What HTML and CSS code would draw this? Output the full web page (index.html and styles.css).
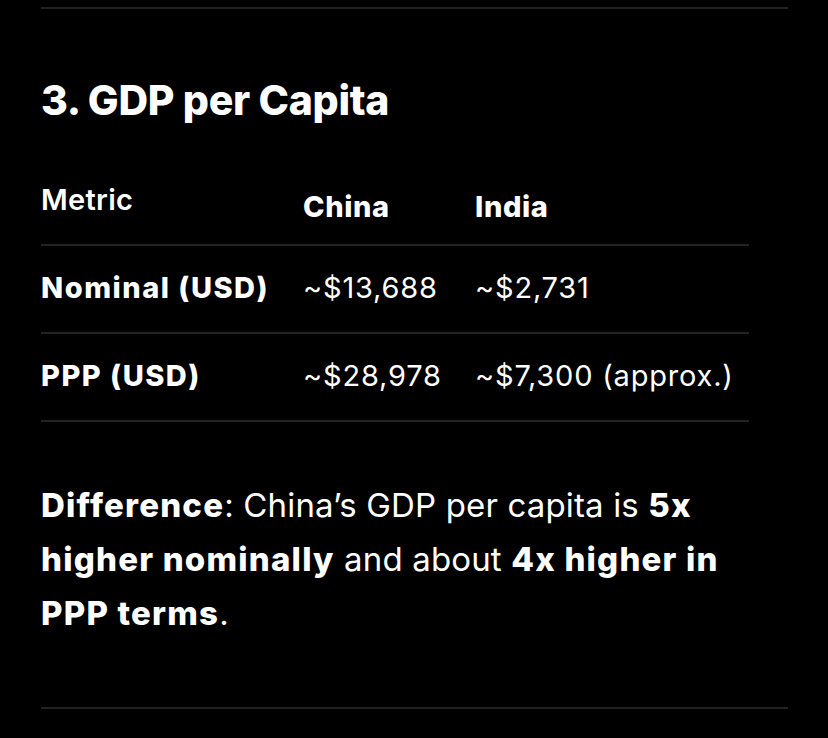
FILE: index.html
```html
<!DOCTYPE html>
<html lang="en">
<head>
<meta charset="utf-8">
<title>GDP per Capita</title>
<link rel="stylesheet" href="styles.css">
</head>
<body>
<div class="page">
  <div class="rule"></div>
  <h2 class="heading">3. GDP per Capita</h2>
  <table class="data">
    <colgroup>
      <col class="c1"><col class="c2"><col class="c3">
    </colgroup>
    <thead>
      <tr>
        <th class="metric">Metric</th>
        <th class="country">China</th>
        <th class="country">India</th>
      </tr>
    </thead>
    <tbody>
      <tr>
        <td class="label">Nominal (USD)</td>
        <td>~$13,688</td>
        <td>~$2,731</td>
      </tr>
      <tr>
        <td class="label">PPP (USD)</td>
        <td>~$28,978</td>
        <td>~$7,300 (approx.)</td>
      </tr>
    </tbody>
  </table>
  <p class="note"><strong>Difference</strong>: China’s GDP per capita is <strong>5x higher nominally</strong> and about <strong>4x higher in PPP terms</strong>.</p>
  <div class="rule rule-bottom"></div>
</div>
</body>
</html>
```
FILE: styles.css
```css
html, body {
  margin: 0;
  padding: 0;
  background: #000;
}
body {
  color: #fff;
  font-family: Inter, "Noto Sans", sans-serif;
  width: 828px;
  height: 738px;
  overflow: hidden;
}
.page {
  padding: 7px 40px 0 41px;
}
.rule {
  height: 2px;
  background: #222;
}
.heading {
  margin: 67px 0 0;
  font-size: 41px;
  line-height: 48px;
  font-weight: 800;
  letter-spacing: -0.3px;
}
.data {
  margin-top: 58px;
  width: 708px;
  border-collapse: collapse;
  table-layout: fixed;
  font-size: 29px;
  line-height: 36px;
  letter-spacing: 0.8px;
}
.c1 { width: 262px; }
.c2 { width: 172px; }
.data th {
  text-align: left;
  vertical-align: bottom;
  padding: 0 0 19px;
  font-weight: 800;
  letter-spacing: 0.6px;
  border-bottom: 2px solid #222;
}
.data th.metric {
  font-weight: 600;
  letter-spacing: 0.3px;
  padding-bottom: 26px;
}
.data td {
  padding: 24px 0 26px;
  font-weight: 400;
  white-space: nowrap;
  border-bottom: 2px solid #222;
}
.data td.label {
  font-weight: 800;
  letter-spacing: 1.5px;
}
.note {
  margin: 56px 0 0;
  width: 710px;
  font-size: 33px;
  line-height: 54px;
  letter-spacing: 0.15px;
}
.note strong {
  font-weight: 800;
  letter-spacing: 1.2px;
}
.rule-bottom {
  margin-top: 67px;
}
```
